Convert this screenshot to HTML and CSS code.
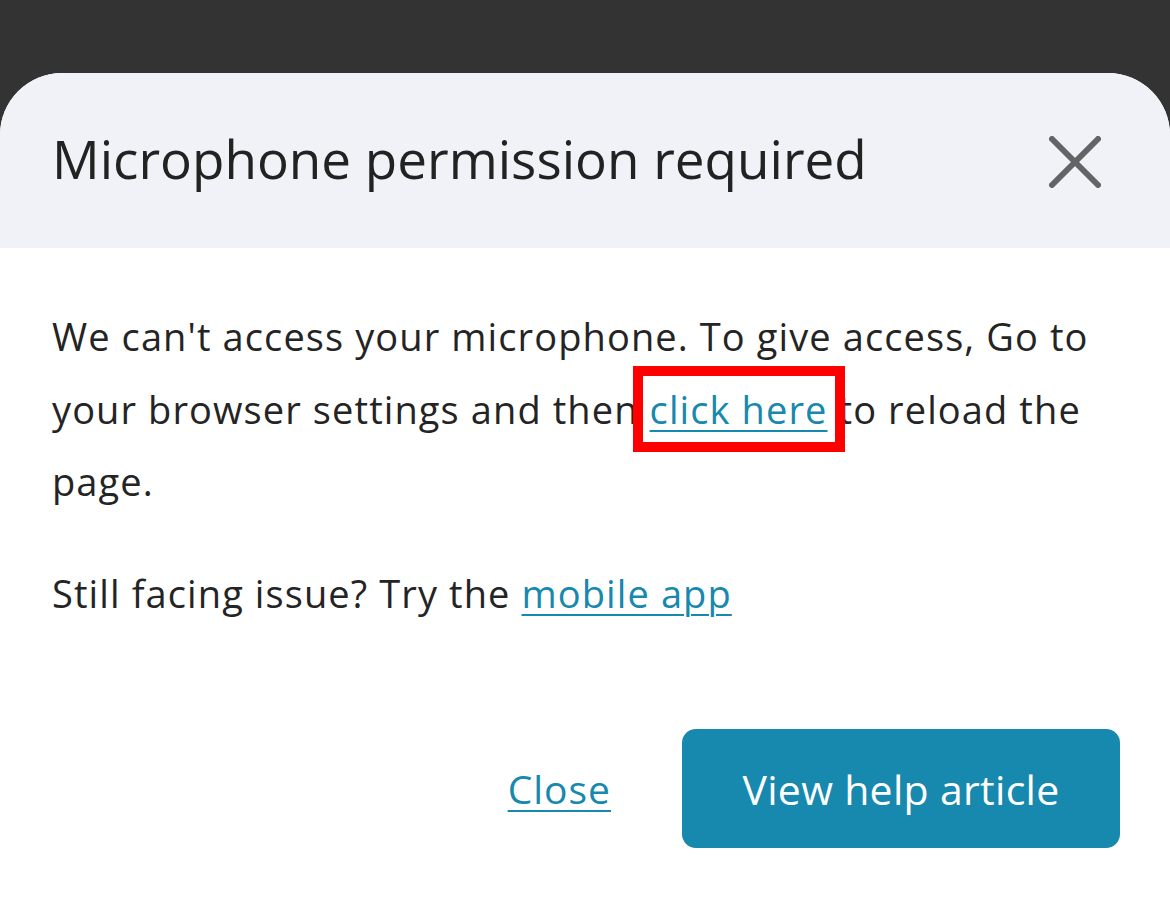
FILE: index.html
```html
<!DOCTYPE html>
<html lang="en">
<head>
<meta charset="utf-8">
<title>Microphone permission required</title>
<link rel="stylesheet" href="styles.css">
</head>
<body>
<div class="backdrop">
  <div class="modal">
    <div class="modal-header">
      <h1 class="modal-title">Microphone permission required</h1>
      <button class="icon-close" aria-label="Close">
        <svg width="52" height="52" viewBox="0 0 52 52"><path d="M3 3 L49 49 M49 3 L3 49" stroke="#646466" stroke-width="6" stroke-linecap="round" fill="none"/></svg>
      </button>
    </div>
    <div class="modal-body">
      <p class="text first">We can't access your microphone. To give access, Go to your browser settings and then <a class="link highlight" href="#">click here</a> to reload the page.</p>
      <p class="text second">Still facing issue? Try the <a class="link" href="#">mobile app</a></p>
      <div class="actions">
        <a class="link close-link" href="#">Close</a>
        <button class="primary">View help article</button>
      </div>
    </div>
  </div>
</div>
</body>
</html>
```
FILE: styles.css
```css
html, body {
  margin: 0;
  padding: 0;
  background: #333333;
  font-family: "Open Sans", "Noto Sans", sans-serif;
  overflow: hidden;
}
.backdrop {
  padding-top: 73px;
  height: 825px;
}
.modal {
  background: #ffffff;
  border-radius: 62px 62px 0 0;
  overflow: hidden;
  height: 825px;
}
.modal-header {
  background: #f1f2f7;
  height: 175px;
  display: flex;
  align-items: center;
  justify-content: space-between;
  padding: 0 69px 0 52px;
}
.modal-title {
  margin: 0;
  font-size: 53px;
  font-weight: 500;
  color: #222222;
  position: relative;
  top: -2px;
}
.icon-close {
  background: none;
  border: 0;
  padding: 0;
  width: 52px;
  height: 52px;
  display: flex;
  position: relative;
  top: 1px;
}
.modal-body {
  padding: 52px 50px 0 52px;
}
.text {
  margin: 0;
  font-size: 38px;
  line-height: 72.5px;
  letter-spacing: 1.1px;
  color: #242424;
}
.text.second {
  margin-top: 39px;
}
.link {
  color: #1788ae;
  text-decoration: underline;
  text-decoration-thickness: 2px;
  text-underline-offset: 6px;
}
.highlight {
  outline: 10px solid #ff0000;
  outline-offset: 7px;
  border-radius: 0;
}
.actions {
  display: flex;
  justify-content: flex-end;
  align-items: center;
  gap: 71px;
  margin-top: 100px;
}
.close-link {
  font-size: 39px;
  letter-spacing: 1px;
}
.primary {
  background: #1788ae;
  color: #ffffff;
  border: 0;
  border-radius: 14px;
  width: 438px;
  height: 119px;
  font-family: inherit;
  font-size: 41px;
  letter-spacing: 0.3px;
}
```
